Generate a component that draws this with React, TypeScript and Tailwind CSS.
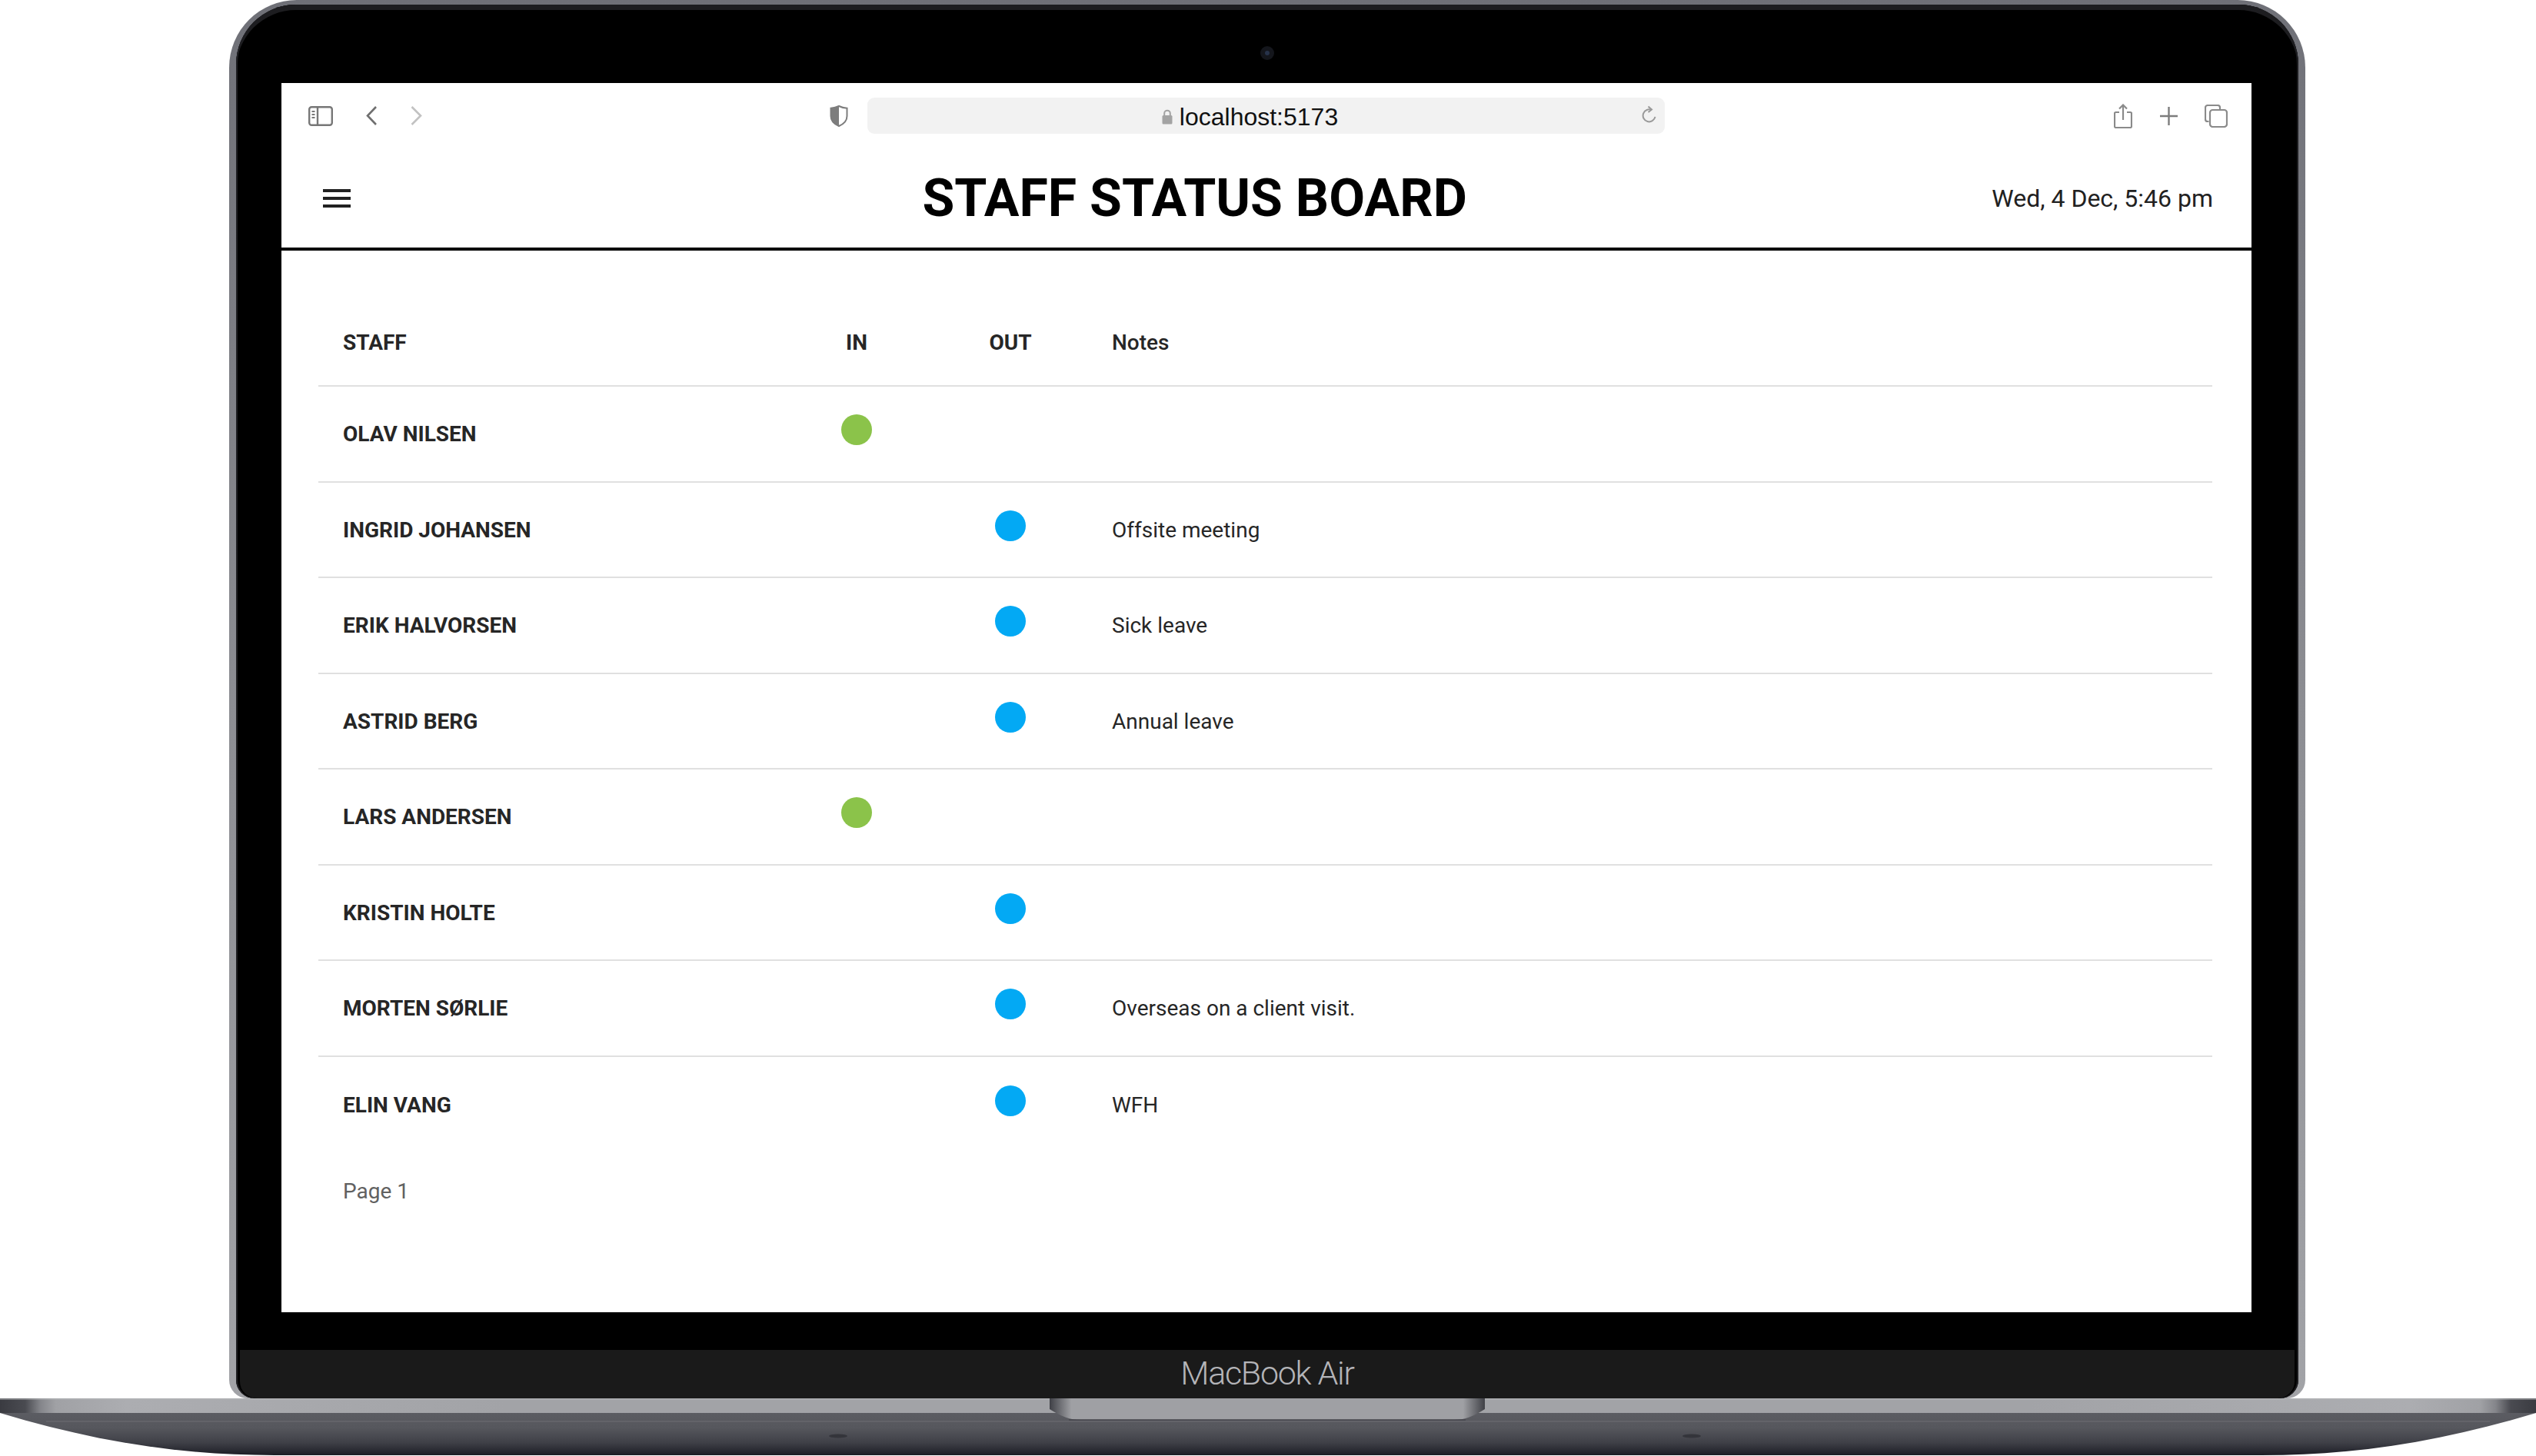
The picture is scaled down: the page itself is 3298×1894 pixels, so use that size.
const staff = [
  { name: "OLAV NILSEN", status: "in", note: "" },
  { name: "INGRID JOHANSEN", status: "out", note: "Offsite meeting" },
  { name: "ERIK HALVORSEN", status: "out", note: "Sick leave" },
  { name: "ASTRID BERG", status: "out", note: "Annual leave" },
  { name: "LARS ANDERSEN", status: "in", note: "" },
  { name: "KRISTIN HOLTE", status: "out", note: "" },
  { name: "MORTEN SØRLIE", status: "out", note: "Overseas on a client visit." },
  { name: "ELIN VANG", status: "out", note: "WFH" },
];

function Toolbar() {
  return (
    <div className="flex h-[86px] items-center pl-[35px] pb-[1px]">
      <svg width="32" height="26" viewBox="0 0 32 26" fill="none" stroke="#777" strokeWidth="2.4">
        <rect x="1.2" y="1.2" width="29.6" height="23.6" rx="3" />
        <path d="M12 1.5V24.5" />
        <path d="M4.5 7H8.5M4.5 11H8.5M4.5 15H8.5" strokeWidth="1.8" />
      </svg>
      <svg className="ml-[43px]" width="14" height="25" viewBox="0 0 14 25" fill="none" stroke="#6f6f6f" strokeWidth="2.6">
        <path d="M13 1L2 12.5L13 24" />
      </svg>
      <svg className="ml-[44px]" width="15" height="25" viewBox="0 0 15 25" fill="none" stroke="#c2c2c2" strokeWidth="2.6">
        <path d="M1.5 1L13 12.5L1.5 24" />
      </svg>
      <svg className="ml-[530px]" width="24" height="28" viewBox="0 0 24 28">
        <path d="M12 1C9 2.6 5 3.6 1.5 3.8V14C1.5 20 6 24.5 12 27C18 24.5 22.5 20 22.5 14V3.8C19 3.6 15 2.6 12 1Z" fill="#fff" stroke="#7d7d7d" strokeWidth="2" />
        <path d="M12 1C9 2.6 5 3.6 1.5 3.8V14C1.5 20 6 24.5 12 27Z" fill="#7d7d7d" />
      </svg>
      <div className="relative ml-[25px] flex h-[47px] w-[1037px] items-center justify-center rounded-[9px] bg-[#f2f2f2]">
        <div className="flex items-center pr-[42px] pt-[3px]">
          <svg className="mr-[9px]" width="14" height="20" viewBox="0 0 14 20">
            <path d="M3.2 9V5.5a3.8 3.8 0 0 1 7.6 0V9" fill="none" stroke="#a3a3a3" strokeWidth="2" />
            <rect x="0.5" y="8" width="13" height="11.5" rx="1.5" fill="#a3a3a3" />
          </svg>
          <span className="font-['Liberation_Sans',sans-serif] text-[32px] leading-[40px] text-[#111]">localhost:5173</span>
        </div>
        <svg className="absolute right-[10px] top-[10px]" width="20" height="24" viewBox="0 0 20 24" fill="none" stroke="#9a9a9a" strokeWidth="2">
          <path d="M10 5.5A8 8 0 1 0 17.5 12" transform="rotate(22 10 13.5)" />
          <path d="M8.5 1.5L13 5.5L8.5 9" />
        </svg>
      </div>
      <svg className="ml-[584px]" width="24" height="32" viewBox="0 0 24 32" fill="none" stroke="#8a8a8a" strokeWidth="2.2">
        <path d="M7 11H2.5A1.5 1.5 0 0 0 1 12.5V29.5A1.5 1.5 0 0 0 2.5 31H21.5A1.5 1.5 0 0 0 23 29.5V12.5A1.5 1.5 0 0 0 21.5 11H17" />
        <path d="M12 21V1.5M7 6.5L12 1.5L17 6.5" />
      </svg>
      <svg className="ml-[36px]" width="23" height="24" viewBox="0 0 23 24" fill="none" stroke="#7d7d7d" strokeWidth="2.4">
        <path d="M11.5 0V24M0 12H23" />
      </svg>
      <svg className="ml-[35px]" width="30" height="30" viewBox="0 0 30 30" fill="none" stroke="#8a8a8a" strokeWidth="2.2">
        <path d="M5.5 22H4A3 3 0 0 1 1 19V4A3 3 0 0 1 4 1H17A3 3 0 0 1 20 4V7" />
        <rect x="7" y="7" width="22" height="22" rx="3.5" />
      </svg>
    </div>
  );
}

function Dot({ color }: { color: string }) {
  return <span className={`mb-[10px] block h-[40px] w-[40px] rounded-full ${color}`} />;
}

function StaffTable() {
  return (
    <div className="pl-[48px] pr-[51px] pt-[65px] font-['Roboto',sans-serif] text-[28px] text-[#262626]">
      <div className="grid h-[112px] grid-cols-[600px_200px_200px_1fr] items-center border-b-2 border-[#e0e0e0] font-bold">
        <div className="pl-[32px]">STAFF</div>
        <div className="text-center">IN</div>
        <div className="text-center">OUT</div>
        <div className="pl-[32px] font-medium">Notes</div>
      </div>
      {staff.map((s, i) => (
        <div
          key={s.name}
          className={`grid h-[124.5px] grid-cols-[600px_200px_200px_1fr] items-center ${i < staff.length - 1 ? "border-b-2 border-[#e0e0e0]" : ""}`}
        >
          <div className="pl-[32px] pt-[2px] font-bold">{s.name}</div>
          <div className="flex justify-center">{s.status === "in" && <Dot color="bg-[#8bc34a]" />}</div>
          <div className="flex justify-center">{s.status === "out" && <Dot color="bg-[#03a9f4]" />}</div>
          <div className="pl-[32px] pt-[2px]">{s.note}</div>
        </div>
      ))}
      <div className="pl-[32px] pt-[30px] text-[#616161]">Page 1</div>
    </div>
  );
}

function Screen() {
  return (
    <div className="h-[1599px] w-[2562px] bg-white">
      <Toolbar />
      <header className="flex h-[132px] items-center justify-between border-b-4 border-black pl-[48px] pr-[50px] font-['Roboto',sans-serif]">
        <svg className="mr-[55px] h-[48px] w-[48px]" viewBox="0 0 24 24" fill="#212121">
          <path d="M3 18h18v-2H3v2zm0-5h18v-2H3v2zm0-7v2h18V6H3z" />
        </svg>
        <h1 className="text-[68px] font-bold leading-none text-black">STAFF STATUS BOARD</h1>
        <div className="text-[32px] text-[#212121]">Wed, 4 Dec, 5:46 pm</div>
      </header>
      <StaffTable />
    </div>
  );
}

function Base() {
  const outline = "M0 19 L3298 19 C3178 55 3068 74 2941 74 L357 74 C230 74 120 55 0 19 Z";
  return (
    <svg className="block" width="3298" height="74" viewBox="0 0 3298 74">
      <defs>
        <linearGradient id="body" x1="0" y1="0" x2="0" y2="1">
          <stop offset="0" stopColor="#5b5c62" />
          <stop offset="0.35" stopColor="#56575d" />
          <stop offset="0.7" stopColor="#3f4047" />
          <stop offset="1" stopColor="#1c1d25" />
        </linearGradient>
        <linearGradient id="strip" x1="0" y1="0" x2="1" y2="0">
          <stop offset="0" stopColor="#3a3b41" />
          <stop offset="0.01" stopColor="#4a4b51" />
          <stop offset="0.016" stopColor="#85868b" />
          <stop offset="0.022" stopColor="#a0a1a5" />
          <stop offset="0.05" stopColor="#acadb1" />
          <stop offset="0.2" stopColor="#a2a3a7" />
          <stop offset="0.8" stopColor="#a2a3a7" />
          <stop offset="0.95" stopColor="#acadb1" />
          <stop offset="0.978" stopColor="#a0a1a5" />
          <stop offset="0.984" stopColor="#85868b" />
          <stop offset="0.99" stopColor="#4a4b51" />
          <stop offset="1" stopColor="#3a3b41" />
        </linearGradient>
        <linearGradient id="notch" x1="0" y1="0" x2="1" y2="0">
          <stop offset="0" stopColor="#3f4046" />
          <stop offset="0.05" stopColor="#9fa0a4" />
          <stop offset="0.95" stopColor="#9fa0a4" />
          <stop offset="1" stopColor="#3f4046" />
        </linearGradient>
      </defs>
      <path d={outline} fill="url(#body)" />
      <path d="M60 30 H3238" stroke="#6e6f75" strokeWidth="1" />
      <rect x="0" y="0" width="3298" height="19" fill="url(#strip)" />
      <rect x="0" y="0" width="3298" height="2" fill="#b4b5b8" opacity="0.5" />
      <path d="M1365 0 H1931 V14 C1915 24 1905 28 1890 28 H1406 C1391 28 1381 24 1365 14 Z" fill="url(#notch)" />
      <path d="M1390 28 H1906" stroke="#44454b" strokeWidth="1.5" />
      <ellipse cx="1090" cy="49" rx="12" ry="2.5" fill="#34353b" />
      <ellipse cx="2200" cy="49" rx="12" ry="2.5" fill="#34353b" />
    </svg>
  );
}

export default function App() {
  return (
    <div className="h-[1894px] w-[3298px] overflow-hidden bg-white">
      <div className="ml-[298px] h-[1819px] w-[2700px] rounded-t-[88px] rounded-b-[24px] bg-gradient-to-b from-[#6f7077] via-[#8c8d92] to-[#a2a3a7] pl-[9px] pr-[9px] pt-[6px]">
        <div className="flex h-[1813px] flex-col overflow-hidden rounded-t-[78px] rounded-b-[24px] bg-black shadow-[inset_0_7px_0_#1d1d20,inset_2px_0_0_#1d1d20,inset_-2px_0_0_#1d1d20]">
          <div className="flex h-[102px] justify-center pt-[54px]">
            <div className="flex h-[18px] w-[18px] items-center justify-center rounded-full bg-[#14161c]">
              <div className="h-[6px] w-[6px] rounded-full bg-[#27324a]" />
            </div>
          </div>
          <div className="pl-[59px]">
            <Screen />
          </div>
          <div className="mt-[49px] mx-[5px] flex h-[63px] flex-1 items-center justify-center rounded-b-[22px] bg-[#1a1a1a] pb-[2px]">
            <span className="font-['Roboto',sans-serif] text-[43px] font-light leading-none tracking-[-1.3px] text-[#b4b4b8]">MacBook Air</span>
          </div>
        </div>
      </div>
      <Base />
    </div>
  );
}
